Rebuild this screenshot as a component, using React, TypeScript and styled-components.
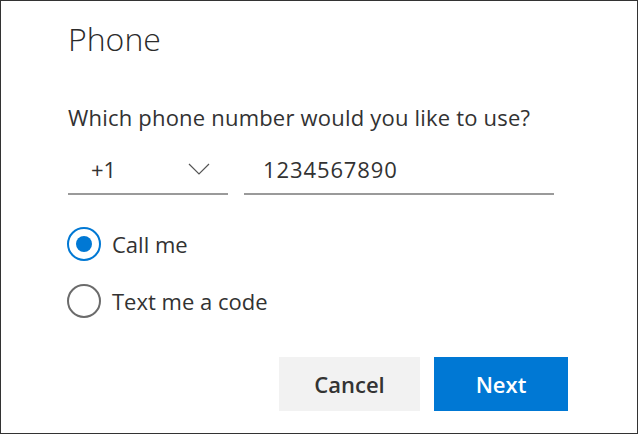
import React from "react";
import styled, { createGlobalStyle } from "styled-components";

const Global = createGlobalStyle`
  html, body { margin: 0; padding: 0; background: #fff; }
  * { box-sizing: border-box; }
`;

const Frame = styled.div`
  width: 638px;
  height: 434px;
  border: 1px solid #333;
  background: #fff;
  padding: 0 69px 0 67px;
  display: flex;
  flex-direction: column;
  font-family: "Open Sans", "Noto Sans", sans-serif;
  color: #323232;
`;

const Title = styled.h1`
  margin: 17px 0 0;
  font-size: 32px;
  font-weight: 300;
  line-height: 42px;
  color: #2b2b2b;
`;

const Question = styled.p`
  margin: 43px 0 0;
  font-size: 22px;
  line-height: 28px;
  letter-spacing: 0.2px;
`;

const PhoneRow = styled.div`
  margin-top: 17px;
  display: flex;
  gap: 16px;
`;

const Field = styled.div<{ $width: number; $padLeft: number; $spacing?: number }>`
  width: ${(p) => p.$width}px;
  height: 47px;
  border-bottom: 2px solid #9a9a9a;
  display: flex;
  align-items: center;
  justify-content: space-between;
  padding: 0 18px 4px ${(p) => p.$padLeft}px;
  font-size: 22px;
  letter-spacing: ${(p) => p.$spacing ?? 0}px;
`;

const Chevron = styled.svg`
  width: 22px;
  height: 12px;
`;

const Options = styled.div`
  margin-top: 32px;
  display: flex;
  flex-direction: column;
  gap: 23px;
`;

const Option = styled.label`
  display: flex;
  align-items: center;
  gap: 11px;
  font-size: 22px;
  height: 34px;
`;

const Radio = styled.span<{ $checked: boolean }>`
  width: 34px;
  height: 34px;
  margin-left: -1px;
  border-radius: 50%;
  border: 2px solid ${(p) => (p.$checked ? "#0078d4" : "#6b6b6b")};
  display: flex;
  align-items: center;
  justify-content: center;
  &::after {
    content: "";
    display: ${(p) => (p.$checked ? "block" : "none")};
    width: 16px;
    height: 16px;
    border-radius: 50%;
    background: #0078d4;
  }
`;

const Actions = styled.div`
  margin-top: 39px;
  display: flex;
  justify-content: flex-end;
  gap: 14px;
`;

const Button = styled.button<{ $primary?: boolean; $width: number }>`
  width: ${(p) => p.$width}px;
  height: 54px;
  border: none;
  font-family: inherit;
  font-size: 22px;
  font-weight: 600;
  background: ${(p) => (p.$primary ? "#0078d4" : "#f2f2f2")};
  color: ${(p) => (p.$primary ? "#fff" : "#333")};
  padding: 0;
`;

export default function App() {
  return (
    <>
      <Global />
      <Frame>
        <Title>Phone</Title>
        <Question>Which phone number would you like to use?</Question>
        <PhoneRow>
          <Field $width={160} $padLeft={23}>
            <span>+1</span>
            <Chevron viewBox="0 0 22 12">
              <path d="M1 1 L11 11 L21 1" fill="none" stroke="#555" strokeWidth="1.2" />
            </Chevron>
          </Field>
          <Field $width={310} $padLeft={19} $spacing={0.9}>
            <span>1234567890</span>
          </Field>
        </PhoneRow>
        <Options>
          <Option>
            <Radio $checked={true} />
            Call me
          </Option>
          <Option>
            <Radio $checked={false} />
            Text me a code
          </Option>
        </Options>
        <Actions>
          <Button $width={141}>Cancel</Button>
          <Button $primary $width={134}>Next</Button>
        </Actions>
      </Frame>
    </>
  );
}
